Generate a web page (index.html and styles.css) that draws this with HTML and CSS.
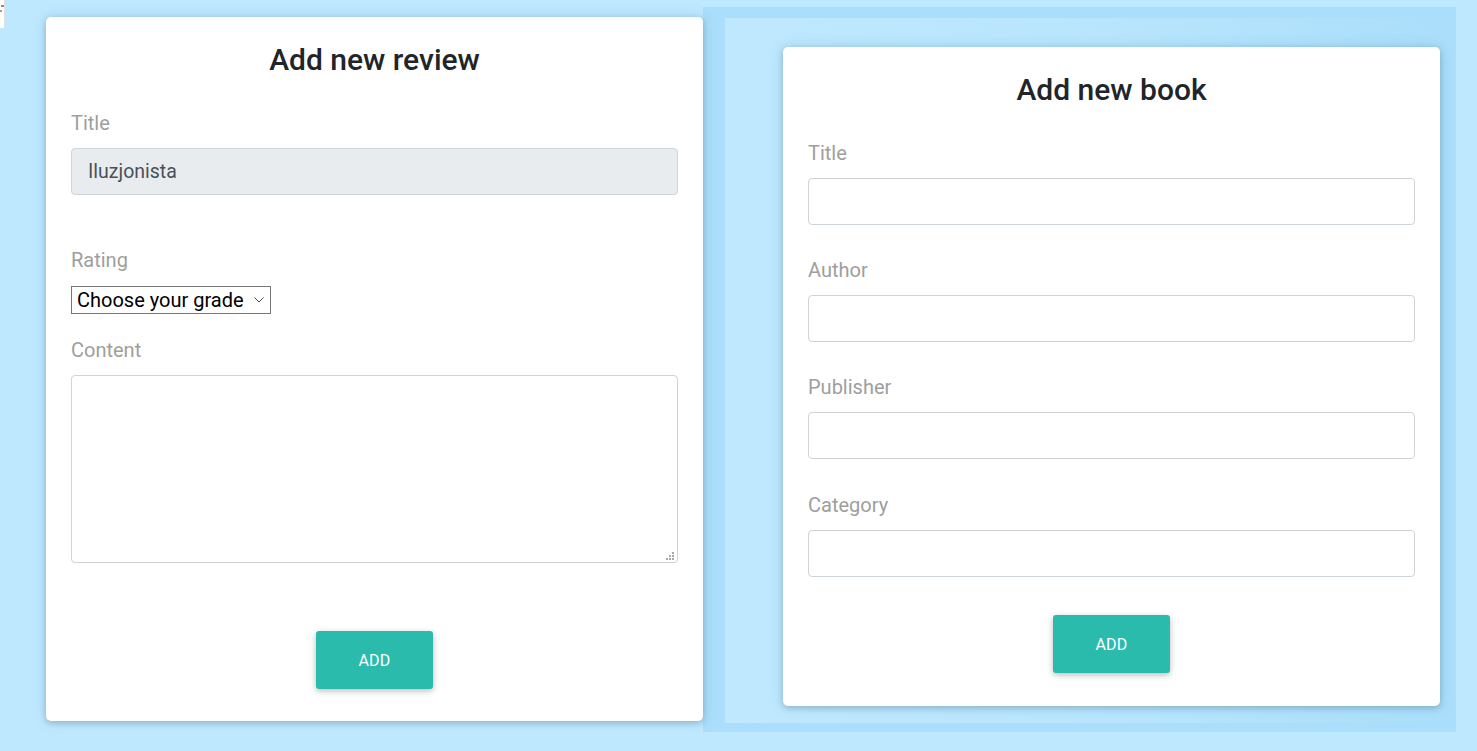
FILE: index.html
```html
<!DOCTYPE html>
<html lang="en">
<head>
<meta charset="utf-8">
<title>Books</title>
<link rel="stylesheet" href="styles.css">
</head>
<body>
<div class="broken-img"><span class="bi-a"></span><span class="bi-b"></span></div>
<div class="page">
  <section class="card card-review">
    <h2 class="card-title">Add new review</h2>
    <div class="group group-wide">
      <label class="label">Title</label>
      <input class="field field-disabled" type="text" value="Iluzjonista" disabled>
    </div>
    <div class="group group-rating">
      <label class="label label-rating">Rating</label>
      <div class="select-wrap">
        <select class="grade">
          <option>Choose your grade</option>
          <option>1</option>
          <option>2</option>
          <option>3</option>
          <option>4</option>
          <option>5</option>
        </select>
        <svg class="chev" width="10" height="6" viewBox="0 0 10 6" aria-hidden="true"><path d="M0.5 0.5 L5 5 L9.5 0.5" fill="none" stroke="#555" stroke-width="1"/></svg>
      </div>
    </div>
    <div class="group group-content">
      <label class="label">Content</label>
      <div class="area-wrap">
        <textarea class="field area"></textarea>
        <span class="grip">
          <i class="g g1"></i><i class="g g2"></i><i class="g g3"></i>
          <i class="g g4"></i><i class="g g5"></i><i class="g g6"></i>
        </span>
      </div>
    </div>
    <button class="btn btn-review" type="button">ADD</button>
  </section>

  <div class="panel">
    <div class="panel-inner">
      <section class="card card-book">
        <h2 class="card-title">Add new book</h2>
        <div class="group">
          <label class="label">Title</label>
          <input class="field" type="text">
        </div>
        <div class="group">
          <label class="label">Author</label>
          <input class="field" type="text">
        </div>
        <div class="group group-pub">
          <label class="label">Publisher</label>
          <input class="field" type="text">
        </div>
        <div class="group group-last">
          <label class="label">Category</label>
          <input class="field" type="text">
        </div>
        <button class="btn btn-book" type="button">ADD</button>
      </section>
    </div>
  </div>
</div>
</body>
</html>
```

FILE: styles.css
```css
* { box-sizing: border-box; }

html, body {
  margin: 0;
  padding: 0;
  height: 100%;
  overflow: hidden;
}

body {
  background: #bee8fe;
  font-family: Roboto, "Liberation Sans", Arial, sans-serif;
  color: #212529;
}

.broken-img {
  position: absolute;
  left: 0;
  top: 0;
  width: 5px;
  height: 28px;
  background: #ffffff;
  border-right: 1px solid #e0e0e0;
}
.bi-a {
  position: absolute;
  left: 1px;
  top: 5px;
  width: 3px;
  height: 2px;
  background: #8a8a8a;
}
.bi-b {
  position: absolute;
  left: 0;
  top: 10px;
  width: 2px;
  height: 2px;
  background: #a0a0a0;
}

.page {
  display: flex;
  align-items: flex-start;
  padding-left: 46px;
}

.card {
  width: 657px;
  background: #ffffff;
  border-radius: 5px;
  box-shadow: 0 2px 6px rgba(0, 0, 0, 0.18), 0 0 14px rgba(40, 120, 170, 0.18);
  padding: 25px 25px 0 25px;
}

.card-review {
  margin-top: 17px;
  padding-bottom: 32px;
  position: relative;
  z-index: 1;
}

.card-book {
  padding-bottom: 33px;
}

.card-title {
  margin: 0 0 33px 0;
  text-align: center;
  font-size: 30px;
  line-height: 36px;
  font-weight: 500;
  color: #212529;
}

.group {
  margin-bottom: 33px;
}
.group-pub { margin-bottom: 34px; }
.group-wide { margin-bottom: 53px; }
.group-rating { margin-bottom: 24px; }
.group-content { margin-bottom: 68px; }
.group-last { margin-bottom: 38px; }

.label {
  display: block;
  font-size: 20px;
  line-height: 24px;
  color: #9e9e9e;
  margin-bottom: 13px;
}
.label-rating { margin-bottom: 14px; }

.field {
  display: block;
  width: 100%;
  height: 47px;
  border: 1px solid #ced4da;
  border-radius: 4px;
  background: #ffffff;
  padding: 0 16px;
  font-family: Roboto, "Liberation Sans", Arial, sans-serif;
  font-size: 19.5px;
  color: #495057;
  outline: none;
}

.field-disabled {
  background: #e9ecef;
  color: #495057;
  opacity: 1;
  -webkit-text-fill-color: #495057;
}

.select-wrap {
  position: relative;
  width: 200px;
  height: 28px;
}

.grade {
  display: block;
  width: 200px;
  height: 28px;
  font-family: Roboto, "Liberation Sans", Arial, sans-serif;
  font-size: 20px;
  color: #000000;
  background: #ffffff;
  border: 1px solid #767676;
  border-radius: 0;
  padding: 0 20px 0 5px;
  -webkit-appearance: none;
  appearance: none;
  outline: none;
}

.chev {
  position: absolute;
  right: 7px;
  top: 11px;
  pointer-events: none;
}

.area-wrap {
  position: relative;
}

.area {
  height: 188px;
  padding: 10px 16px;
  resize: none;
}

.grip {
  position: absolute;
  right: 4px;
  bottom: 3px;
  width: 8px;
  height: 8px;
  pointer-events: none;
}
.g {
  position: absolute;
  width: 2px;
  height: 2px;
  background: #a8a8a8;
}
.g1 { right: 0; top: 0; }
.g2 { right: 3px; top: 3px; }
.g3 { right: 0; top: 3px; }
.g4 { right: 6px; top: 6px; }
.g5 { right: 3px; top: 6px; }
.g6 { right: 0; top: 6px; }

.btn {
  display: block;
  margin: 0 auto;
  width: 117px;
  height: 58px;
  border: none;
  border-radius: 3px;
  background: #2bbbad;
  color: #ffffff;
  font-family: Roboto, "Liberation Sans", Arial, sans-serif;
  font-size: 16px;
  font-weight: 400;
  letter-spacing: 0.2px;
  box-shadow: 0 2px 5px rgba(0, 0, 0, 0.16), 0 2px 10px rgba(0, 0, 0, 0.12);
  cursor: pointer;
}

.panel {
  margin-top: 7px;
  width: 753px;
  height: 725px;
  background: #aadefa;
  padding: 11px 0 9px 22px;
}

.panel-inner {
  height: 100%;
  background: linear-gradient(to right, #bfe8fe 0%, #b8e5fd 55%, #aadefa 100%);
  padding: 29px 16px 0 58px;
}
```
